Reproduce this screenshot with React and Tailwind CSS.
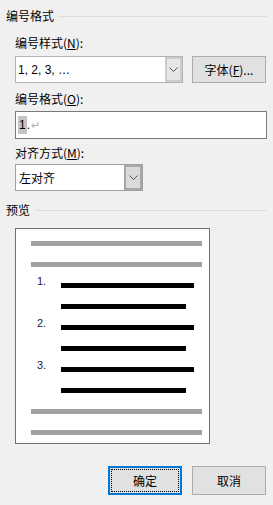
import React from "react";

const Chevron = () => (
  <svg width="9" height="5" viewBox="0 0 9 5" className="block">
    <path d="M0.5 0.5 L4.5 4.5 L8.5 0.5" fill="none" stroke="#555" strokeWidth="1" />
  </svg>
);

function BlackRow({ num, short }) {
  return (
    <div className="flex items-center h-[5px]">
      <span className="w-[24px] ml-[21px] text-[11px] leading-none relative -top-[4px] text-[#1c1c3c] font-['Liberation_Sans',sans-serif]">
        {num}
      </span>
      <div className={(short ? "w-[125px]" : "w-[133px]") + " h-[5px] bg-black"} />
    </div>
  );
}

export default function App() {
  return (
    <div className="w-[273px] h-[505px] bg-[#f0f0f0] text-[12px] leading-[16px] text-black font-['Noto_Sans_CJK_SC',sans-serif] flex flex-col overflow-hidden">
      {/* heading 1 */}
      <div className="mt-[8px] h-[16px] flex items-center pl-[6px] pr-[6px]">
        <span>编号格式</span>
        <div className="flex-1 h-px bg-[#dcdcdc] ml-[4px]" />
      </div>
      {/* label 1 */}
      <div className="mt-[11px] h-[16px] pl-[15px]">
        编号样式(<span className="underline">N</span>):
      </div>
      {/* combo + font button */}
      <div className="mt-[5px] h-[27px] flex pl-[15px]">
        <div className="w-[168px] h-[27px] flex bg-white border border-[#b4b4b4]">
          <div className="flex-1 flex items-center pl-[2px] font-['Liberation_Sans',sans-serif] text-[12px]">
            1, 2, 3, …
          </div>
          <div className="w-[17px] h-full bg-[#e6e6e6] border-2 border-[#cccccc] flex items-center justify-center">
            <Chevron />
          </div>
        </div>
        <div className="ml-[9px] w-[74px] h-[27px] bg-[#e1e1e1] border border-[#adadad] flex items-center justify-center">
          字体(<span className="underline">F</span>)...
        </div>
      </div>
      {/* label 2 */}
      <div className="mt-[8px] h-[16px] pl-[15px]">
        编号格式(<span className="underline">O</span>):
      </div>
      <div className="mt-[4px] h-[28px] ml-[15px] w-[252px] bg-white border border-[#7a7a7a] flex items-center pl-[2px] font-['Liberation_Sans',sans-serif]">
        <span className="bg-[#c4c4c4] px-[1px] leading-[18px]">1</span>
        <span>.</span>
        <span className="text-[#b0b0b0] text-[11px] ml-[1px]">↵</span>
      </div>
      {/* label 3 */}
      <div className="mt-[6px] h-[16px] pl-[15px]">
        对齐方式(<span className="underline">M</span>):
      </div>
      <div className="mt-[3px] ml-[15px] w-[128px] h-[27px] flex bg-white border border-[#a0a0a0]">
        <div className="flex-1 flex items-center pl-[3px]">左对齐</div>
        <div className="w-[18px] h-full bg-[#dadada] border-2 border-[#a8a8a8] flex items-center justify-center">
          <Chevron />
        </div>
      </div>
      {/* heading 2 */}
      <div className="mt-[11px] h-[16px] flex items-center pl-[6px] pr-[6px]">
        <span>预览</span>
        <div className="flex-1 h-px bg-[#dcdcdc] ml-[5px]" />
      </div>
      {/* preview */}
      <div className="mt-[10px] ml-[15px] w-[195px] h-[216px] bg-white border border-[#707070] pt-[12px] flex flex-col gap-[16px]">
        <div className="ml-[15px] w-[171px] h-[5px] bg-[#a0a0a0]" />
        <div className="ml-[15px] w-[171px] h-[5px] bg-[#a0a0a0]" />
        <BlackRow num="1." />
        <BlackRow short />
        <BlackRow num="2." />
        <BlackRow short />
        <BlackRow num="3." />
        <BlackRow short />
        <div className="ml-[15px] w-[171px] h-[5px] bg-[#a0a0a0]" />
        <div className="ml-[15px] w-[171px] h-[5px] bg-[#a0a0a0]" />
      </div>
      {/* buttons */}
      <div className="mt-[22px] flex justify-end gap-[10px] pr-[7px]">
        <div className="w-[74px] h-[29px] bg-[#e1e1e1] border-2 border-[#0078d7] p-[1px]">
          <div className="w-full h-full border border-dotted border-black flex items-center justify-center">
            确定
          </div>
        </div>
        <div className="w-[74px] h-[29px] bg-[#e1e1e1] border border-[#adadad] flex items-center justify-center">
          取消
        </div>
      </div>
    </div>
  );
}
